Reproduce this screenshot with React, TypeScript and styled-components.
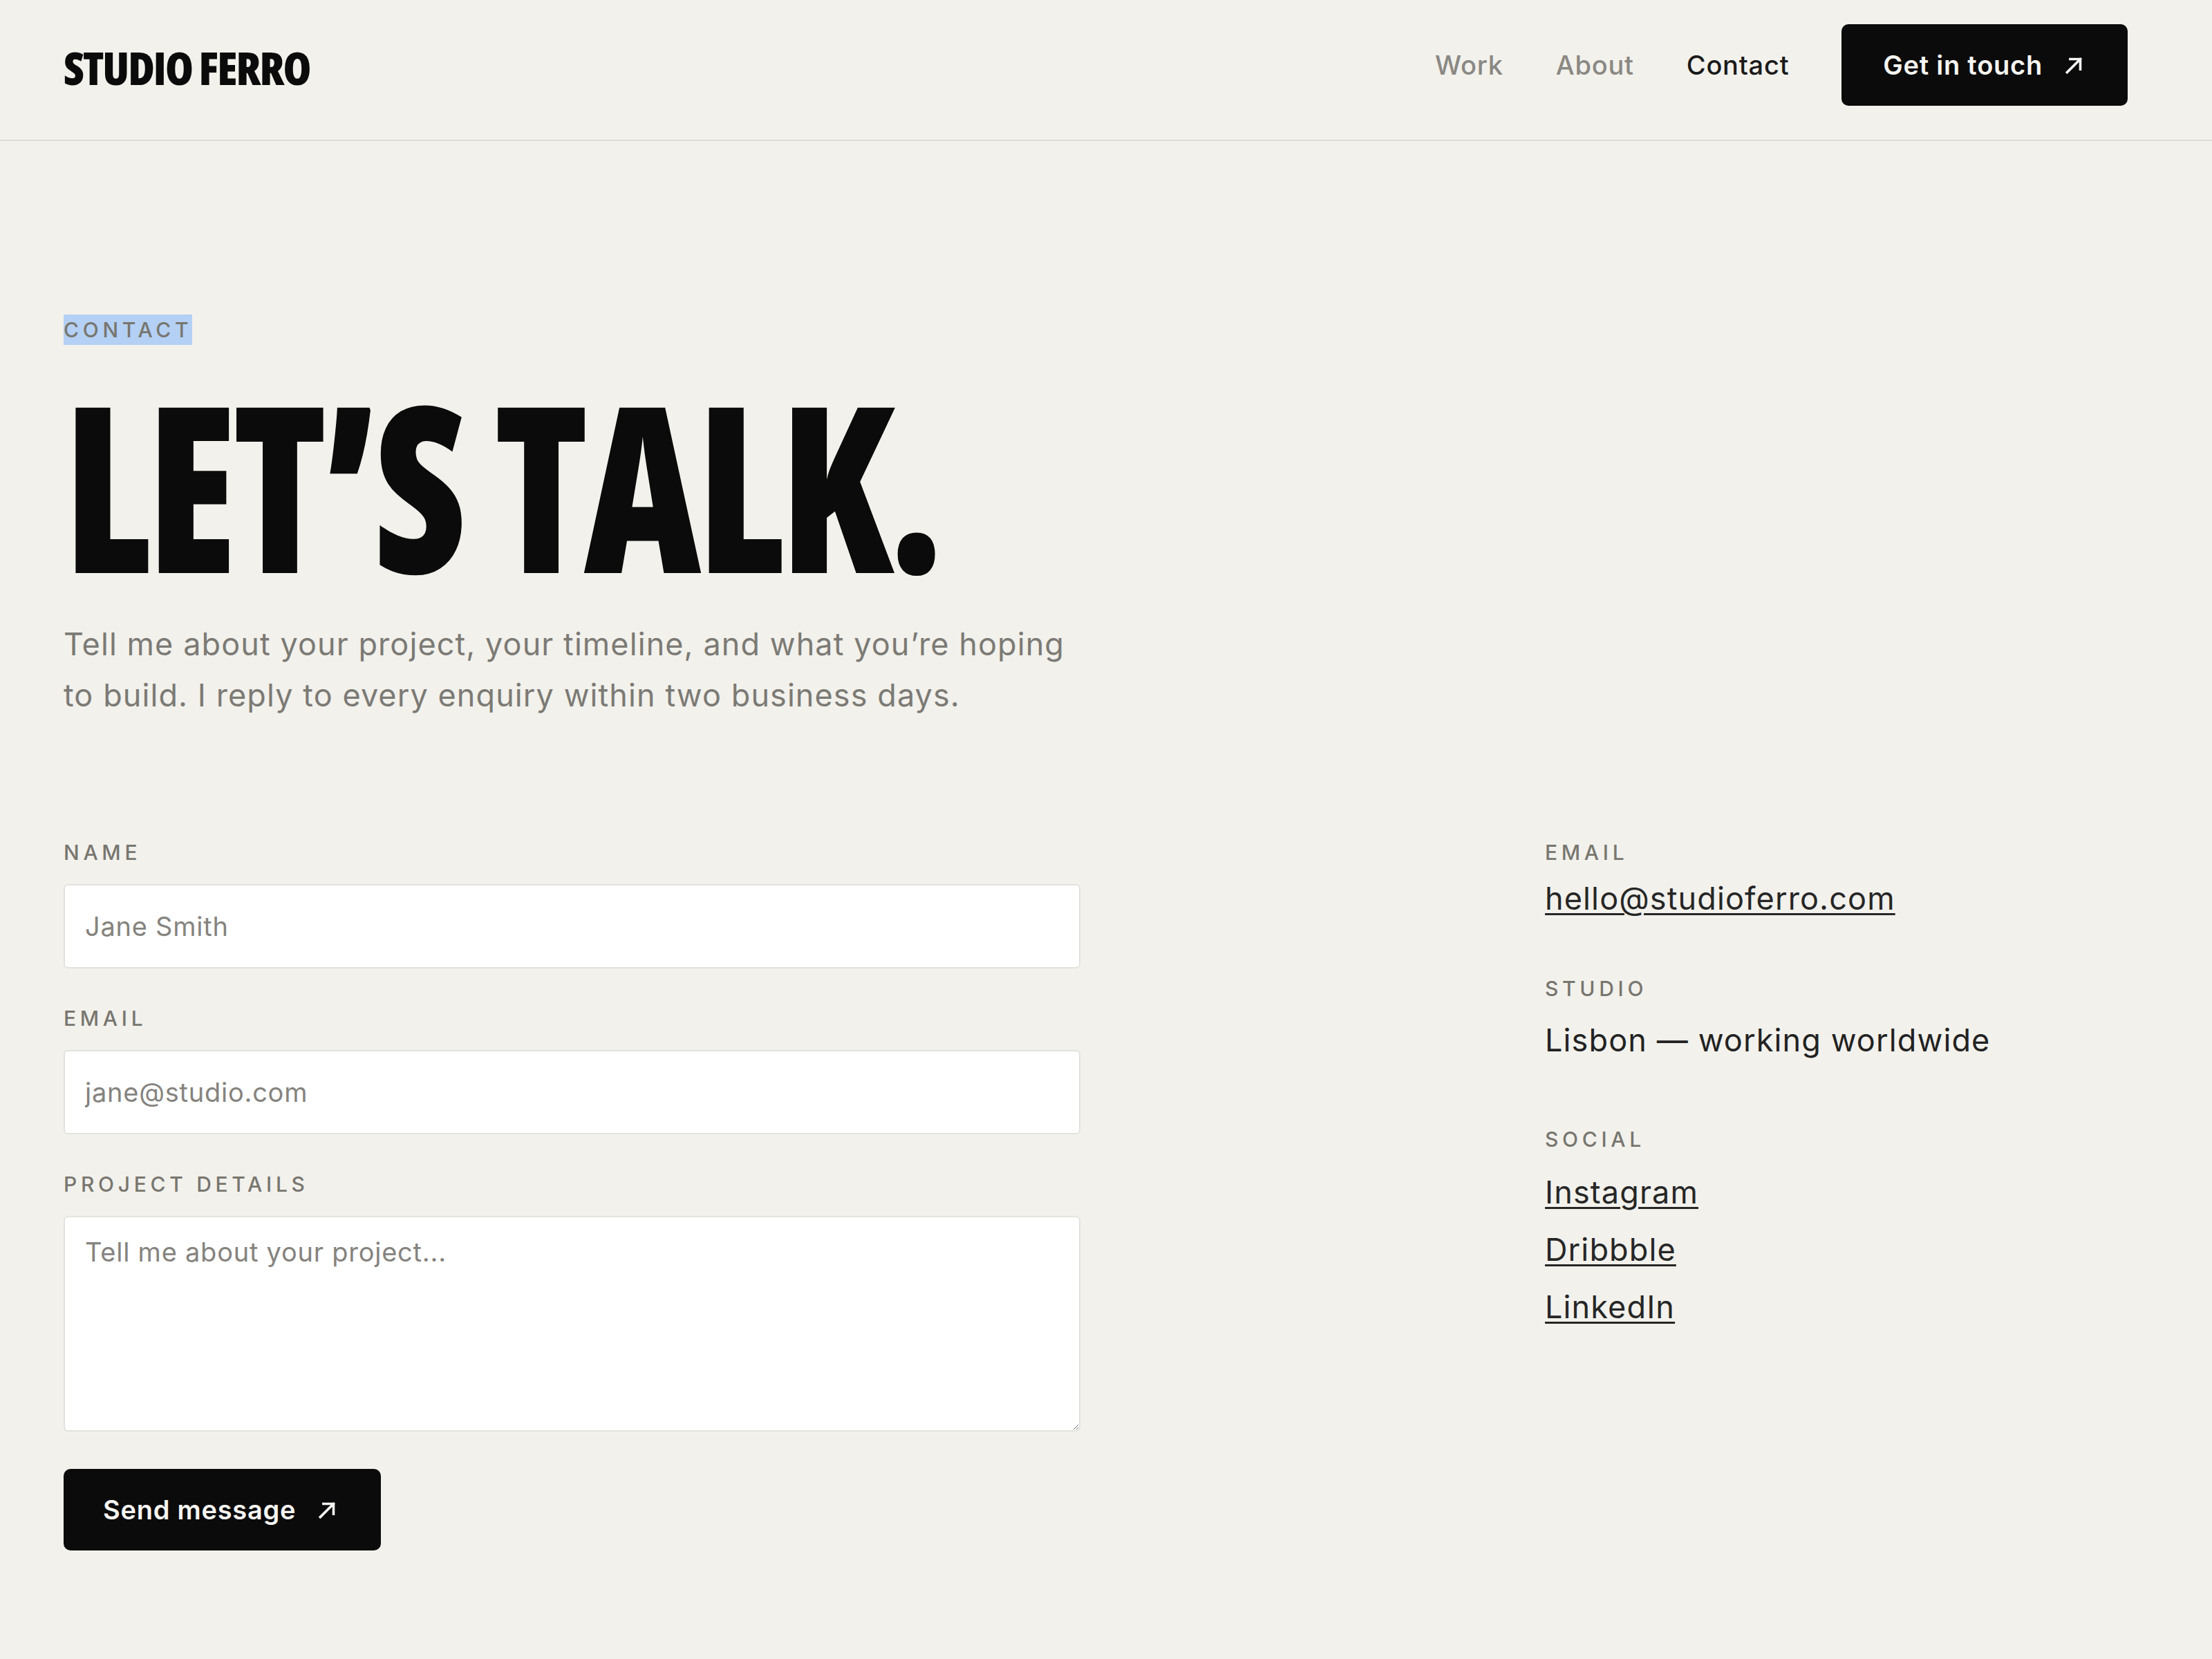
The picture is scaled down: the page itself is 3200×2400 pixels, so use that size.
import React from 'react';
import styled, { createGlobalStyle } from 'styled-components';

const GlobalStyle = createGlobalStyle`
  * { box-sizing: border-box; }
  body {
    margin: 0;
    background: #f2f1ec;
    font-family: Inter, 'Liberation Sans', sans-serif;
    color: #1b1b1b;
  }
`;

const ArrowUpRight = ({ size = 27 }: { size?: number }) => (
  <svg width={size} height={size} viewBox="0 0 24 24" fill="none">
    <path
      d="M3 21 L20 4 M7 4 H20 V17"
      stroke="currentColor"
      strokeWidth={3.2}
      strokeLinecap="square"
    />
  </svg>
);

const App = () => (
  <Page>
    <GlobalStyle />
    <Header>
      <Logo>STUDIO FERRO</Logo>
      <Nav>
        <NavLink>Work</NavLink>
        <NavLink>About</NavLink>
        <NavLink active>Contact</NavLink>
        <BlackButton>
          Get in touch
          <ArrowUpRight />
        </BlackButton>
      </Nav>
    </Header>

    <Main>
      <Eyebrow>
        <Selected>CONTACT</Selected>
      </Eyebrow>
      <Headline>LET’S TALK.</Headline>
      <Intro>
        Tell me about your project, your timeline, and what you’re hoping
        to build. I reply to every enquiry within two business days.
      </Intro>

      <Columns>
        <Form onSubmit={(e) => e.preventDefault()}>
          <Field>
            <Label>NAME</Label>
            <Input placeholder="Jane Smith" />
          </Field>
          <Field>
            <Label>EMAIL</Label>
            <Input placeholder="jane@studio.com" />
          </Field>
          <Field>
            <Label>PROJECT DETAILS</Label>
            <TextArea placeholder="Tell me about your project..." />
          </Field>
          <div>
            <BlackButton type="submit" narrow>
              Send message
              <ArrowUpRight />
            </BlackButton>
          </div>
        </Form>

        <Aside>
          <InfoGroup after={85}>
            <Label>EMAIL</Label>
            <InfoValue top={22}>
              <InfoLink href="#">hello@studioferro.com</InfoLink>
            </InfoValue>
          </InfoGroup>
          <InfoGroup after={98}>
            <Label>STUDIO</Label>
            <InfoValue top={30}>Lisbon — working worldwide</InfoValue>
          </InfoGroup>
          <InfoGroup after={0}>
            <Label>SOCIAL</Label>
            <SocialList>
              <InfoLink href="#">Instagram</InfoLink>
              <InfoLink href="#">Dribbble</InfoLink>
              <InfoLink href="#">LinkedIn</InfoLink>
            </SocialList>
          </InfoGroup>
        </Aside>
      </Columns>
    </Main>
  </Page>
);

const Page = styled.div`
  min-height: 2400px;
`;

const Header = styled.header`
  display: flex;
  align-items: center;
  justify-content: space-between;
  padding: 35px 122px 49px 92px;
  border-bottom: 2px solid #dddbd5;
`;

const Logo = styled.div`
  font-family: 'Open Sans', sans-serif;
  font-stretch: 75%;
  font-weight: 800;
  font-size: 66px;
  letter-spacing: -2px;
  line-height: 1;
  color: #0b0b0b;
  margin-top: 6px;
`;

const Nav = styled.nav`
  display: flex;
  align-items: center;
  gap: 76px;
`;

const NavLink = styled.a<{ active?: boolean }>`
  font-size: 38px;
  font-weight: 500;
  letter-spacing: 0.02em;
  color: ${({ active }) => (active ? '#1a1a1a' : '#8a8883')};
  text-decoration: none;
  cursor: pointer;
`;

const BlackButton = styled.button<{ narrow?: boolean }>`
  display: inline-flex;
  align-items: center;
  gap: 32px;
  height: 118px;
  padding: ${({ narrow }) => (narrow ? '0 64px 0 57px' : '0 64px 0 60px')};
  background: #0b0b0b;
  color: #f6f5f2;
  border: none;
  border-radius: 10px;
  font-family: Inter, sans-serif;
  font-size: 38px;
  font-weight: 600;
  letter-spacing: 0.02em;
  cursor: pointer;
`;

const Main = styled.main`
  padding: 251px 122px 120px 92px;
`;

const Eyebrow = styled.div`
  height: 44px;
`;

const Selected = styled.span`
  display: inline-block;
  line-height: 44px;
  background: #b4d0f4;
  font-size: 30px;
  font-weight: 500;
  letter-spacing: 0.19em;
  color: #78766f;
`;

const Headline = styled.h1`
  margin: 33px 0 0;
  font-family: 'Open Sans', sans-serif;
  font-stretch: 75%;
  font-weight: 800;
  font-size: 335px;
  line-height: 335px;
  letter-spacing: -0.02em;
  color: #0b0b0b;
  transform: scaleX(0.88);
  transform-origin: left top;
  white-space: nowrap;
`;

const Intro = styled.p`
  margin: 28px 0 0;
  max-width: 1480px;
  font-size: 45px;
  line-height: 74px;
  letter-spacing: 0.024em;
  color: #7c7a75;
`;

const Columns = styled.div`
  display: grid;
  grid-template-columns: 1471px 843px;
  justify-content: space-between;
  align-items: start;
  margin-top: 172px;
`;

const Form = styled.form`
  display: flex;
  flex-direction: column;
  gap: 54px;
`;

const Field = styled.label`
  display: flex;
  flex-direction: column;
  gap: 28px;
`;

const Label = styled.span`
  display: block;
  font-size: 30px;
  line-height: 36px;
  font-weight: 500;
  letter-spacing: 0.19em;
  color: #78766f;
`;

const Input = styled.input`
  height: 122px;
  padding: 0 29px;
  background: #ffffff;
  border: 2px solid #e4e2dd;
  border-radius: 6px;
  font-family: Inter, sans-serif;
  font-size: 38px;
  letter-spacing: 0.02em;
  color: #1b1b1b;
  outline: none;

  &::placeholder {
    color: #85837e;
  }
`;

const TextArea = styled.textarea`
  height: 312px;
  padding: 22px 29px;
  background: #ffffff;
  border: 2px solid #e4e2dd;
  border-radius: 6px;
  font-family: Inter, sans-serif;
  font-size: 38px;
  letter-spacing: 0.02em;
  line-height: 1.5;
  color: #1b1b1b;
  outline: none;
  resize: vertical;

  &::placeholder {
    color: #85837e;
  }
`;

const Aside = styled.aside`
  display: flex;
  flex-direction: column;
`;

const InfoGroup = styled.div<{ after: number }>`
  margin-bottom: ${({ after }) => after}px;
`;

const InfoValue = styled.div<{ top: number }>`
  margin-top: ${({ top }) => top}px;
  font-size: 45px;
  line-height: 54px;
  letter-spacing: 0.025em;
  color: #222222;
`;

const InfoLink = styled.a`
  font-size: 45px;
  line-height: 54px;
  letter-spacing: 0.025em;
  color: #262626;
  text-decoration: underline;
  text-decoration-thickness: 3px;
  text-underline-offset: 5px;
`;

const SocialList = styled.div`
  display: flex;
  flex-direction: column;
  align-items: flex-start;
  gap: 29px;
  margin-top: 32px;
`;

export default App;
